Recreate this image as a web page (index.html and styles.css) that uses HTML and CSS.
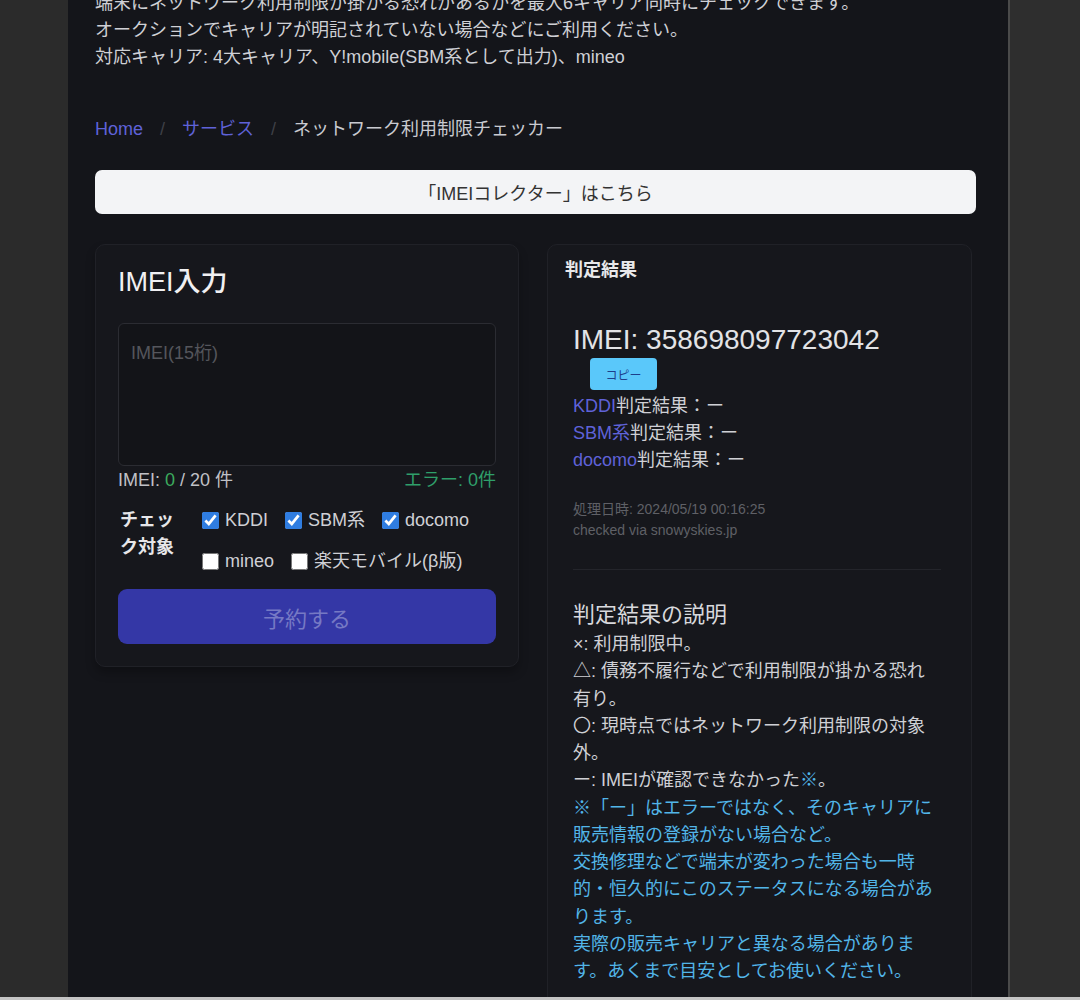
FILE: index.html
```html
<!DOCTYPE html>
<html lang="ja">
<head>
<meta charset="utf-8">
<title>ネットワーク利用制限チェッカー</title>
<link rel="stylesheet" href="styles.css">
</head>
<body>
<div class="screen">
  <div class="frame">
    <div class="gutter-left"></div>
    <main class="panel">
      <div class="intro">
        <p>端末にネットワーク利用制限が掛かる恐れがあるかを最大6キャリア同時にチェックできます。</p>
        <p>オークションでキャリアが明記されていない場合などにご利用ください。</p>
        <p>対応キャリア: 4大キャリア、Y!mobile(SBM系として出力)、mineo</p>
      </div>
      <nav class="crumbs">
        <a class="crumb-link">Home</a><span class="crumb-sep">/</span><a class="crumb-link">サービス</a><span class="crumb-sep">/</span><span class="crumb-current">ネットワーク利用制限チェッカー</span>
      </nav>
      <button class="collector">「IMEIコレクター」はこちら</button>
      <div class="cols">
        <section class="card input-card">
          <h2 class="input-title">IMEI入力</h2>
          <textarea class="imei-area" placeholder="IMEI(15桁)"></textarea>
          <div class="counter">
            <span class="count-left">IMEI: <span class="green">0</span> / 20 件</span>
            <span class="count-right">エラー: 0件</span>
          </div>
          <div class="checks">
            <div class="checks-label">チェック対象</div>
            <div class="checks-opts">
              <label class="opt"><input type="checkbox" checked>KDDI</label>
              <label class="opt"><input type="checkbox" checked>SBM系</label>
              <label class="opt"><input type="checkbox" checked>docomo</label>
              <label class="opt"><input type="checkbox">mineo</label>
              <label class="opt"><input type="checkbox">楽天モバイル(β版)</label>
            </div>
          </div>
          <button class="reserve">予約する</button>
        </section>
        <section class="card result-card">
          <h3 class="result-title">判定結果</h3>
          <div class="result-body">
            <div class="imei-num">IMEI: 358698097723042</div>
            <button class="copy">コピー</button>
            <div class="res-lines">
              <div class="res-line"><span class="carrier">KDDI</span>判定結果：ー</div>
              <div class="res-line"><span class="carrier">SBM系</span>判定結果：ー</div>
              <div class="res-line"><span class="carrier">docomo</span>判定結果：ー</div>
            </div>
            <div class="meta">
              <div>処理日時: 2024/05/19 00:16:25</div>
              <div>checked via snowyskies.jp</div>
            </div>
            <hr class="divider">
            <h4 class="explain-title">判定結果の説明</h4>
            <div class="explain">
              <p>×: 利用制限中。</p>
              <p>△: 債務不履行などで利用制限が掛かる恐れ有り。</p>
              <p>〇: 現時点ではネットワーク利用制限の対象外。</p>
              <p>ー: IMEIが確認できなかった<span class="cyan">※</span>。</p>
              <p class="cyan">※「ー」はエラーではなく、そのキャリアに販売情報の登録がない場合など。</p>
              <p class="cyan">交換修理などで端末が変わった場合も一時的・恒久的にこのステータスになる場合があります。</p>
              <p class="cyan">実際の販売キャリアと異なる場合があります。あくまで目安としてお使いください。</p>
            </div>
          </div>
        </section>
      </div>
    </main>
    <div class="gutter-right"></div>
  </div>
  <div class="bottom-strip"></div>
</div>
</body>
</html>
```
FILE: styles.css
```css
html, body {
  margin: 0;
  padding: 0;
}
body {
  background: #2b2b2b;
  font-family: "Liberation Sans", "Noto Sans CJK JP", sans-serif;
  font-size: 18px;
  line-height: 27px;
  color: #cfd0d5;
}
.screen {
  height: 1000px;
  display: flex;
  flex-direction: column;
  overflow: hidden;
}
.frame {
  display: flex;
  height: 997px;
}
.gutter-left {
  width: 68px;
  background: #2b2b2b;
  flex: none;
}
.gutter-right {
  flex: 1;
  background: #2e2e2e;
}
.bottom-strip {
  height: 3px;
  background: #c4c4c4;
}
.panel {
  width: 942px;
  flex: none;
  box-sizing: border-box;
  background: #14151a;
  padding: 0 32px 0 27px;
  border-right: 2px solid #4a4a4a;
  overflow: hidden;
}
.intro {
  margin-top: -10px;
}
.intro p {
  margin: 0;
  color: #cfd0d5;
}
.crumbs {
  margin-top: 45px;
  display: flex;
  align-items: center;
}
.crumb-link {
  color: #5f62d8;
}
.crumb-sep {
  color: #3f4047;
  margin: 0 17px;
}
.crumb-current {
  color: #c9cad0;
}
.collector {
  display: block;
  width: 100%;
  height: 44px;
  margin-top: 27px;
  border: none;
  border-radius: 7px;
  background: #f3f4f6;
  color: #333;
  font-family: inherit;
  font-size: 18px;
}
.cols {
  margin-top: 30px;
  display: grid;
  grid-template-columns: 424px 425px;
  column-gap: 28px;
  justify-content: start;
  align-items: start;
}
.card {
  border: 1px solid #202127;
  border-radius: 10px;
  background: #16171c;
}
.input-card {
  padding: 19px 22px 22px 22px;
  box-shadow: 0 6px 10px rgba(0,0,0,0.25);
}
.input-title {
  margin: 0;
  font-size: 27px;
  line-height: 36px;
  font-weight: 500;
  color: #f0f0f2;
}
.imei-area {
  display: block;
  box-sizing: border-box;
  width: 100%;
  height: 143px;
  margin-top: 23px;
  padding: 14px 12px;
  background: #131418;
  border: 1px solid #2b2c32;
  border-radius: 6px;
  resize: none;
  font-family: inherit;
  font-size: 18px;
  color: #ddd;
}
.imei-area::placeholder {
  color: #55565c;
}
.counter {
  display: flex;
  justify-content: space-between;
  margin-top: 1px;
}
.count-left {
  color: #c0c1c6;
}
.green {
  color: #3cab5e;
}
.count-right {
  color: #2f9f6a;
}
.checks {
  display: flex;
  margin-top: 13px;
}
.checks-label {
  width: 62px;
  margin-left: 2px;
  margin-right: 20px;
  font-weight: bold;
  color: #e6e6e9;
  flex: none;
}
.checks-opts {
  flex: 1;
  display: flex;
  flex-wrap: wrap;
  column-gap: 17px;
  row-gap: 14px;
}
.opt {
  display: inline-flex;
  align-items: center;
  gap: 6px;
  color: #cfd0d5;
}
.opt input {
  width: 17px;
  height: 17px;
  margin: 0;
  accent-color: #2f7de1;
}
.reserve {
  display: block;
  width: 100%;
  height: 55px;
  margin-top: 14px;
  border: none;
  border-radius: 9px;
  background: #3437a6;
  color: #7679c4;
  font-family: inherit;
  font-size: 22px;
}
.result-card {
  padding: 12px 30px 40px 17px;
}
.result-title {
  margin: 0;
  font-size: 18px;
  line-height: 27px;
  font-weight: bold;
  color: #e8e8ea;
}
.result-body {
  margin-left: 8px;
}
.imei-num {
  margin-top: 38px;
  font-size: 28px;
  line-height: 35px;
  color: #e2e3e6;
}
.copy {
  display: block;
  width: 67px;
  height: 32px;
  margin: 1px 0 0 17px;
  border: none;
  border-radius: 4px;
  background: #5ac8fa;
  color: #1d3f8a;
  font-family: inherit;
  font-size: 12px;
}
.res-lines {
  margin-top: 3px;
}
.res-line {
  color: #cfd0d5;
}
.carrier {
  color: #5f62d8;
}
.meta {
  margin-top: 25px;
  font-size: 14px;
  line-height: 21px;
  color: #5f6066;
}
.divider {
  margin: 28px 0 0 0;
  border: none;
  border-top: 1px solid #24252b;
}
.explain-title {
  margin: 29px 0 0 0;
  font-size: 22px;
  line-height: 31px;
  font-weight: normal;
  color: #d8d9dd;
}
.explain {
  width: 366px;
  margin-top: 1px;
  line-height: 27.25px;
}
.explain p {
  margin: 0;
}
.cyan {
  color: #52b5e8;
}
```
